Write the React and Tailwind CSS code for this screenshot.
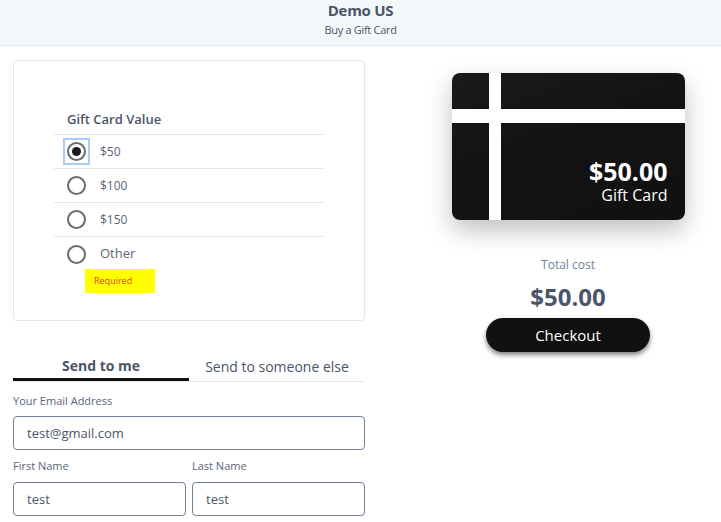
import React, {useState} from "react";

const options = ["$50", "$100", "$150", "Other"];

function Radio({checked}) {
    return (
        <span className={`flex h-[23px] w-[23px] items-center justify-center ${checked ? "ring-2 ring-[#a8cdf0]" : ""}`}>
            <span className="flex h-[19px] w-[19px] items-center justify-center rounded-full border-2 border-[#6b6b6b] bg-white">
                {checked && <span className="h-[9px] w-[9px] rounded-full bg-[#1a1a1a]"></span>}
            </span>
        </span>
    );
}

function App() {
    const [value, setValue] = useState("$50");
    const [tab, setTab] = useState(0);

    return (
        <div className="min-h-[522px] bg-white text-[#4a5568]" style={{fontFamily: '"Open Sans", "Noto Sans", sans-serif'}}>
            <header className="flex h-[46px] flex-col items-center border-b border-[#e2e8f0] bg-[#f5f8fb]">
                <div className="text-[15px] font-bold leading-[20px] tracking-[-0.3px]">Demo US</div>
                <div className="text-[11px] leading-[20px] tracking-[-0.3px] text-[#4a5568]">Buy a Gift Card</div>
            </header>

            <div className="flex pl-[13px] pt-[14px]">
                <div className="w-[352px]">
                    <div className="h-[261px] rounded border border-[#e2e8f0] pt-[50px]">
                        <div className="ml-[40px] w-[270px]">
                            <div className="border-b border-[#e2e8f0] pb-[7px] pl-[13px] text-[13px] font-semibold leading-[16px]">Gift Card Value</div>
                            {options.map((o, i) => (
                                <div key={o}
                                     onClick={() => setValue(o)}
                                     className={`flex h-[34px] cursor-pointer items-center gap-[12px] pl-[11px] ${i < 3 ? "border-b border-[#e2e8f0]" : ""}`}>
                                    <Radio checked={value === o}/>
                                    <span className={`${o === "Other" ? "text-[13px]" : "text-[12px]"} text-[#5a6578]`}>{o}</span>
                                </div>
                            ))}
                            <div className="ml-[31px] mt-[-2px] flex h-[24px] w-[70px] items-center bg-[#ffff00] pl-[9px] text-[9px] text-[#e53e3e]">Required</div>
                        </div>
                    </div>

                    <div className="mt-[32px] flex border-b border-[#e2e8f0]">
                        <button onClick={() => setTab(0)}
                                className={`h-[28px] w-[176px] text-[14px] leading-[18px] ${tab === 0 ? "border-b-[3px] border-[#111] font-bold" : ""}`}>Send to me</button>
                        <button onClick={() => setTab(1)}
                                className={`h-[28px] flex-1 text-[14px] leading-[18px] ${tab === 1 ? "border-b-[3px] border-[#111] font-bold" : ""}`}>Send to someone else</button>
                    </div>

                    <div className="mt-[12px] text-[11px] leading-[14px] text-[#5a6578]">Your Email Address</div>
                    <input defaultValue="test@gmail.com"
                           className="mt-[8px] h-[34px] w-full rounded border border-[#718096] px-[13px] text-[13px] text-[#4a5568] outline-none"/>

                    <div className="mt-[9px] grid grid-cols-2 gap-[6px]">
                        <div>
                            <div className="text-[11px] leading-[14px] text-[#5a6578]">First Name</div>
                            <input defaultValue="test"
                                   className="mt-[9px] h-[34px] w-full rounded border border-[#718096] px-[13px] text-[13px] text-[#4a5568] outline-none"/>
                        </div>
                        <div>
                            <div className="text-[11px] leading-[14px] text-[#5a6578]">Last Name</div>
                            <input defaultValue="test"
                                   className="mt-[9px] h-[34px] w-full rounded border border-[#718096] px-[13px] text-[13px] text-[#4a5568] outline-none"/>
                        </div>
                    </div>
                </div>

                <div className="flex flex-1 flex-col items-center pl-[50px] pt-[13px]">
                    <div className="relative h-[147px] w-[233px] overflow-hidden rounded-[8px] bg-[linear-gradient(160deg,#1a1a1a_0%,#131313_45%,#111_100%)] shadow-[0_10px_25px_rgba(0,0,0,0.25)]">
                        <div className="absolute left-[37px] top-0 h-full w-[12px] bg-white"></div>
                        <div className="absolute left-0 top-[36px] h-[14px] w-full bg-white"></div>
                        <div className="absolute bottom-[15px] right-[17px] flex flex-col items-end text-white">
                            <div className="text-[25px] font-bold leading-[28px]">$50.00</div>
                            <div className="text-[16px] leading-[20px]">Gift Card</div>
                        </div>
                    </div>
                    <div className="mt-[37px] text-[12px] leading-[16px] text-[#718096]">Total cost</div>
                    <div className="mt-[10px] text-[24px] font-bold leading-[28px]">$50.00</div>
                    <button className="mt-[7px] h-[34px] w-[164px] rounded-full bg-[#111] text-[15px] text-white shadow-[0_3px_5px_rgba(0,0,0,0.5)]">Checkout</button>
                </div>
            </div>
        </div>
    );
}

export default App;
